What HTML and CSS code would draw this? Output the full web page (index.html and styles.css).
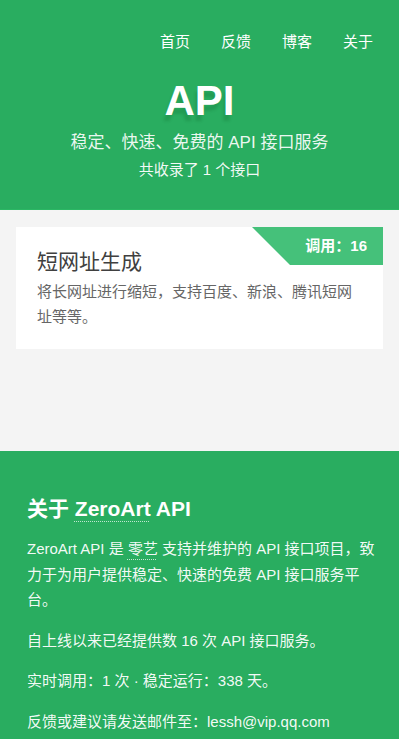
FILE: index.html
```html
<!DOCTYPE html>
<html lang="zh-CN">
<head>
<meta charset="utf-8">
<title>ZeroArt API</title>
<link rel="stylesheet" href="styles.css">
</head>
<body>
<header class="hero">
  <nav class="nav">
    <a href="#">首页</a>
    <a href="#">反馈</a>
    <a href="#">博客</a>
    <a href="#">关于</a>
  </nav>
  <h1 class="hero-title">API</h1>
  <p class="hero-sub">稳定、快速、免费的 API 接口服务</p>
  <p class="hero-count">共收录了 1 个接口</p>
</header>
<main class="main">
  <div class="card">
    <div class="ribbon">调用：16</div>
    <h2 class="card-title">短网址生成</h2>
    <p class="card-desc">将长网址进行缩短，支持百度、新浪、腾讯短网址等等。</p>
  </div>
</main>
<footer class="about">
  <h3 class="about-title">关于 <a href="#" class="dotted">ZeroArt</a> API</h3>
  <p>ZeroArt API 是 <a href="#" class="dotted">零艺</a> 支持并维护的 API 接口项目，致力于为用户提供稳定、快速的免费 API 接口服务平台。</p>
  <p>自上线以来已经提供数 16 次 API 接口服务。</p>
  <p>实时调用：1 次 · 稳定运行：338 天。</p>
  <p>反馈或建议请发送邮件至：lessh@vip.qq.com</p>
</footer>
</body>
</html>
```

FILE: styles.css
```css
* { box-sizing: border-box; }
html, body {
  margin: 0;
  padding: 0;
}
body {
  background: #f4f4f4;
  font-family: "Liberation Sans", "Noto Sans CJK SC", sans-serif;
  color: #fff;
}
a { color: inherit; text-decoration: none; }

.hero {
  background: #29ad60;
  border-bottom: 1px solid #2bb764;
  padding: 32px 0 28px;
  text-align: center;
}
.nav {
  display: flex;
  justify-content: flex-end;
  gap: 31px;
  padding-right: 26px;
  font-size: 15px;
  line-height: 20px;
}
.hero-title {
  margin: 24px 0 0;
  font-size: 42px;
  line-height: 50px;
  font-weight: bold;
  text-shadow: -2px 6px 3px rgba(0, 60, 20, 0.16);
}
.hero-sub {
  margin: 4px 0 0;
  font-size: 17px;
  line-height: 26px;
  color: rgba(255, 255, 255, 0.92);
}
.hero-count {
  margin: 3px 0 0;
  font-size: 15px;
  line-height: 22px;
  color: rgba(255, 255, 255, 0.95);
}

.main {
  padding: 17px 16px 102px;
}
.card {
  position: relative;
  background: #fff;
  padding: 20px 21px 20px;
  overflow: hidden;
}
.ribbon {
  position: absolute;
  top: 0;
  right: 0;
  width: 131px;
  height: 38px;
  background: #45c17a;
  clip-path: polygon(0 0, 100% 0, 100% 100%, 38px 100%);
  color: #fff;
  font-weight: bold;
  font-size: 15px;
  line-height: 38px;
  text-align: right;
  padding-right: 16px;
}
.card-title {
  margin: 0;
  font-size: 21px;
  line-height: 30px;
  font-weight: normal;
  color: #404040;
}
.card-desc {
  margin: 2px 0 0;
  font-size: 15px;
  line-height: 25px;
  color: #666;
}

.about {
  background: #29ad60;
  padding: 43px 15px 30px 27px;
}
.about-title {
  margin: 0;
  font-size: 21px;
  line-height: 30px;
  font-weight: bold;
}
.about p {
  margin: 15px 0 0;
  font-size: 15px;
  line-height: 25.5px;
  color: rgba(255, 255, 255, 0.96);
}
.about .about-title + p { margin-top: 12px; }
.dotted {
  text-decoration: underline dotted rgba(255, 255, 255, 0.7);
  text-decoration-thickness: 1px;
  text-underline-offset: 5px;
}
```
